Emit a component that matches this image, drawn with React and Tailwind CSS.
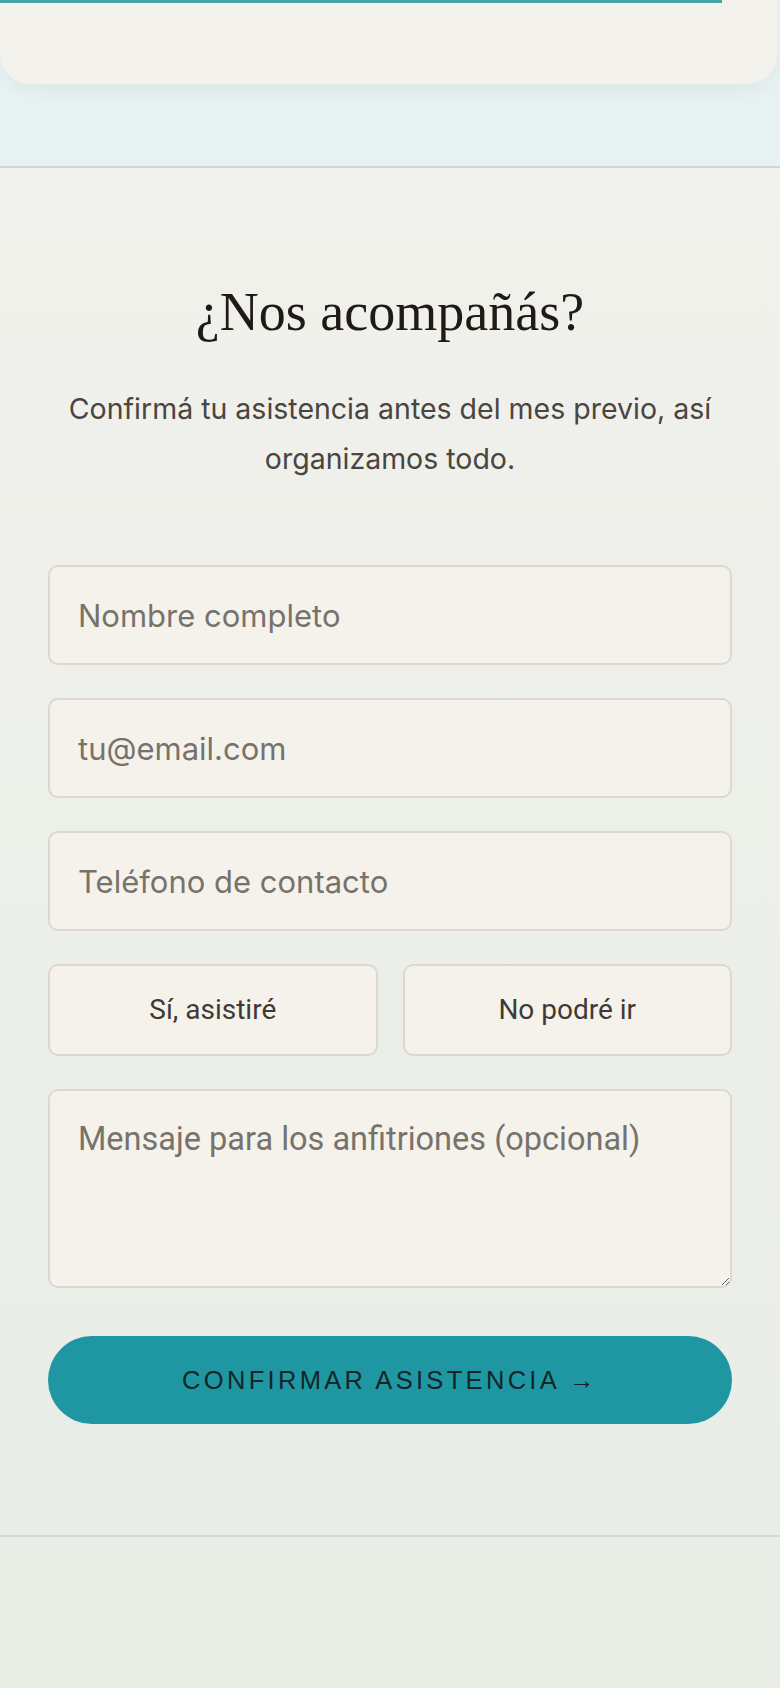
export default function App() {
  const field =
    "h-[100px] w-full rounded-[10px] border-2 border-[#dcd8cf] bg-[#f5f2eb] px-[28px] text-[31px] text-[#3d3935] placeholder:text-[#77726c] outline-none font-['Inter','Noto_Sans',sans-serif]";
  const toggle =
    "h-[92px] rounded-[10px] border-2 border-[#dcd8cf] bg-[#f5f2eb] text-[28px] text-[#3f3a36] font-['Roboto','Noto_Sans',sans-serif]";
  return (
    <div className="relative w-[780px] min-h-[1688px] bg-[#e8eee6] overflow-hidden">
      {/* progress bar */}
      <div className="absolute left-0 top-0 z-10 h-[3px] w-[722px] bg-[#45a3aa]" />

      {/* top area with card */}
      <div className="h-[166px] bg-gradient-to-b from-[#ecf3f1] to-[#e5f1f3]">
        <div className="mr-[3px] h-[84px] rounded-b-[30px] bg-[#f4f2ec] shadow-[0_6px_18px_rgba(160,190,190,0.18)]" />
      </div>

      {/* RSVP section */}
      <section className="border-y-2 border-[#d3d6d1] bg-gradient-to-b from-[#f1f1ec] to-[#e9ede7] px-[48px] pt-[112px] pb-[111px]">
        <h2 className="text-center text-[54px] leading-[64px] text-[#1f1a16] font-['Liberation_Serif','DejaVu_Serif',serif]">
          ¿Nos acompañás?
        </h2>
        <p className="mt-[40px] text-center text-[28.5px] leading-[50px] text-[#4b4540] font-['Inter','Noto_Sans',sans-serif]">
          Confirmá tu asistencia antes del mes previo, así organizamos todo.
        </p>

        <form className="mt-[81px] flex flex-col gap-[33px]" onSubmit={(e) => e.preventDefault()}>
          <input type="text" placeholder="Nombre completo" className={field} />
          <input type="email" placeholder="tu@email.com" className={field} />
          <input type="tel" placeholder="Teléfono de contacto" className={field} />
          <div className="grid grid-cols-2 gap-[25px]">
            <button type="button" className={toggle}>
              Sí, asistiré
            </button>
            <button type="button" className={toggle}>
              No podré ir
            </button>
          </div>
          <textarea
            placeholder="Mensaje para los anfitriones (opcional)"
            className="h-[199px] w-full resize-y rounded-[10px] border-2 border-[#dcd8cf] bg-[#f5f2eb] px-[28px] pt-[28px] text-[32.5px] leading-[40px] text-[#3d3935] placeholder:text-[#77726c] outline-none font-['Roboto','Noto_Sans',sans-serif]"
          />
          <button
            type="submit"
            className="mt-[15px] h-[88px] w-full rounded-full bg-[#1e97a3] text-[25.5px] tracking-[0.13em] text-[#132527] font-['Liberation_Sans',Arial,sans-serif]"
          >
            CONFIRMAR ASISTENCIA →
          </button>
        </form>
      </section>
    </div>
  );
}
